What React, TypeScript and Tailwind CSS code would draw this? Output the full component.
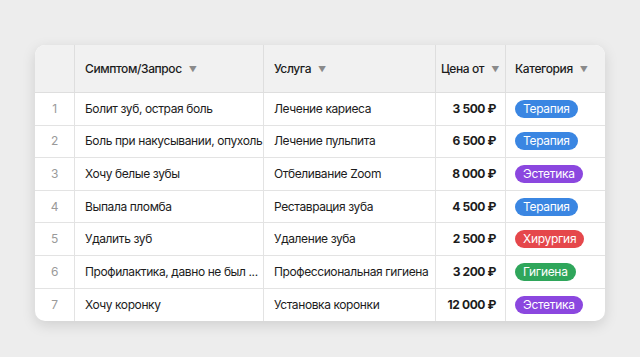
import React from 'react';

type Row = { n: number; symptom: string; service: string; price: string; cat: string };

const rows: Row[] = [
  { n: 1, symptom: 'Болит зуб, острая боль', service: 'Лечение кариеса', price: '3 500 ₽', cat: 'Терапия' },
  { n: 2, symptom: 'Боль при накусывании, опухоль', service: 'Лечение пульпита', price: '6 500 ₽', cat: 'Терапия' },
  { n: 3, symptom: 'Хочу белые зубы', service: 'Отбеливание Zoom', price: '8 000 ₽', cat: 'Эстетика' },
  { n: 4, symptom: 'Выпала пломба', service: 'Реставрация зуба', price: '4 500 ₽', cat: 'Терапия' },
  { n: 5, symptom: 'Удалить зуб', service: 'Удаление зуба', price: '2 500 ₽', cat: 'Хирургия' },
  { n: 6, symptom: 'Профилактика, давно не был ...', service: 'Профессиональная гигиена', price: '3 200 ₽', cat: 'Гигиена' },
  { n: 7, symptom: 'Хочу коронку', service: 'Установка коронки', price: '12 000 ₽', cat: 'Эстетика' },
];

const badge: Record<string, string> = {
  'Терапия': 'bg-[#3a86e2]',
  'Эстетика': 'bg-[#8b47df]',
  'Хирургия': 'bg-[#e5474b]',
  'Гигиена': 'bg-[#2fa65b]',
};

const Caret = () => <span className="ml-[7px] text-[8px] text-[#8a8a8a]">▼</span>;

export default function App() {
  return (
    <div className="w-[640px] h-[357px] bg-[#ededed] pt-[45px] pl-[35px] font-['Inter','Noto_Sans',sans-serif] text-[12px] tracking-[-0.4px] text-[#1c1c1c]">
      <div className="w-[570px] rounded-[10px] bg-white overflow-hidden shadow-[0_4px_14px_rgba(0,0,0,0.13)]">
        <div className="grid grid-cols-[40px_189px_172px_70px_99px] h-[48px] bg-[#f1f1f1] border-b border-[#dedede] font-medium whitespace-nowrap">
          <div className="border-r border-[#dedede]" />
          <div className="flex items-center pl-[10px] border-r border-[#dedede]">Симптом/Запрос<Caret /></div>
          <div className="flex items-center pl-[10px] border-r border-[#dedede]">Услуга<Caret /></div>
          <div className="flex items-center justify-end pr-[6px] border-r border-[#dedede]">Цена от<Caret /></div>
          <div className="flex items-center pl-[9px]">Категория<Caret /></div>
        </div>
        {rows.map((r, i) => (
          <div
            key={r.n}
            className={`grid grid-cols-[40px_189px_172px_70px_99px] h-[32.6px] whitespace-nowrap ${i < rows.length - 1 ? 'border-b border-[#e3e3e3]' : ''}`}
          >
            <div className="flex items-center justify-center text-[#9a9a9a] border-r border-[#e3e3e3]">{r.n}</div>
            <div className="flex items-center pl-[10px] border-r border-[#e3e3e3] overflow-hidden">{r.symptom}</div>
            <div className="flex items-center pl-[10px] border-r border-[#e3e3e3] overflow-hidden">{r.service}</div>
            <div className="flex items-center justify-end pr-[9px] font-bold border-r border-[#e3e3e3]">{r.price}</div>
            <div className="flex items-center pl-[9px]">
              <span className={`${badge[r.cat]} text-white rounded-full px-[8px] h-[18px] leading-[18px] tracking-[-0.3px]`}>{r.cat}</span>
            </div>
          </div>
        ))}
      </div>
    </div>
  );
}
